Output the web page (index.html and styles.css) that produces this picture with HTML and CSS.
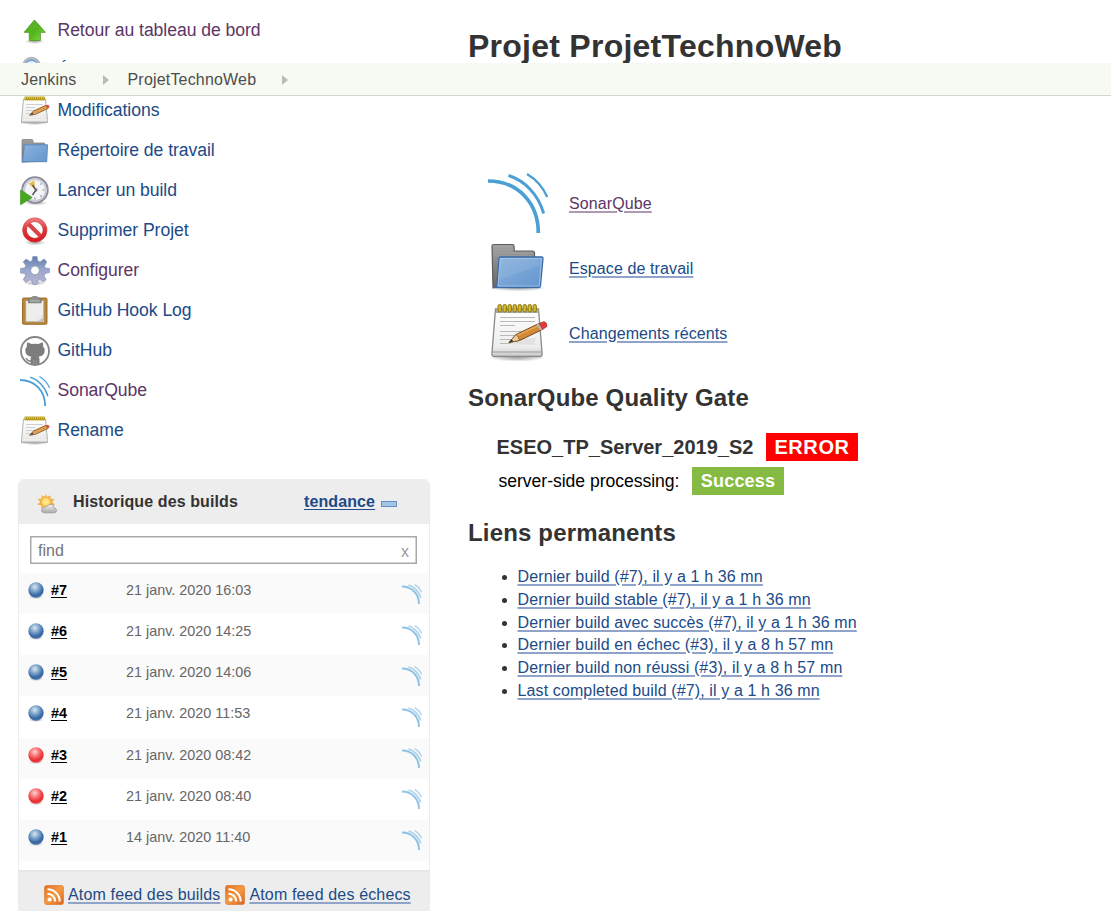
FILE: index.html
```html
<!DOCTYPE html>
<html lang="fr">
<head>
<meta charset="utf-8">
<title>ProjetTechnoWeb [Jenkins]</title>
<link rel="stylesheet" href="styles.css">
</head>
<body>
<svg class="defs" width="0" height="0" aria-hidden="true">
  <defs>
    <linearGradient id="gGreen" x1="0" y1="0" x2="1" y2="1"><stop offset="0" stop-color="#5fae2c"/><stop offset=".55" stop-color="#54b51c"/><stop offset="1" stop-color="#8be04a"/></linearGradient>
    <linearGradient id="gPaper" x1="0" y1="0" x2="0" y2="1"><stop offset="0" stop-color="#ffffff"/><stop offset=".8" stop-color="#ececec"/><stop offset="1" stop-color="#c8c8c8"/></linearGradient>
    <linearGradient id="gBlueF" x1="0" y1="0" x2="1" y2="1"><stop offset="0" stop-color="#8bb2dc"/><stop offset="1" stop-color="#6496cf"/></linearGradient>
    <linearGradient id="gGrayF" x1="0" y1="0" x2="0" y2="1"><stop offset="0" stop-color="#a0a0a0"/><stop offset="1" stop-color="#686868"/></linearGradient>
    <linearGradient id="gGear" x1="0" y1="0" x2="0" y2="1"><stop offset="0" stop-color="#5f7bab"/><stop offset=".45" stop-color="#98a6cb"/><stop offset="1" stop-color="#bab5d0"/></linearGradient>
    <linearGradient id="gRed" x1="0" y1="0" x2="0" y2="1"><stop offset="0" stop-color="#ef7475"/><stop offset=".5" stop-color="#dd3338"/><stop offset="1" stop-color="#d51f26"/></linearGradient>
    <linearGradient id="gRss" x1="0" y1="0" x2="1" y2="1"><stop offset="0" stop-color="#e06f23"/><stop offset=".5" stop-color="#f59a42"/><stop offset="1" stop-color="#d9601e"/></linearGradient>
    <radialGradient id="gBallB" cx=".42" cy=".3" r=".7"><stop offset="0" stop-color="#dbe8ec"/><stop offset=".4" stop-color="#7fa6cd"/><stop offset=".8" stop-color="#3564a3"/><stop offset="1" stop-color="#4a78b3"/></radialGradient>
    <radialGradient id="gBallR" cx=".42" cy=".3" r=".7"><stop offset="0" stop-color="#ffd6d6"/><stop offset=".4" stop-color="#f87676"/><stop offset=".8" stop-color="#e92a2f"/><stop offset="1" stop-color="#f04d4f"/></radialGradient>
    <radialGradient id="gShadow"><stop offset="0" stop-color="#000" stop-opacity=".35"/><stop offset="1" stop-color="#000" stop-opacity="0"/></radialGradient>
    <radialGradient id="gSun"><stop offset="0" stop-color="#fff3a0"/><stop offset="1" stop-color="#f9cc55"/></radialGradient>
    <linearGradient id="gCloud" x1="0" y1="0" x2="0" y2="1"><stop offset="0" stop-color="#f4f4f4"/><stop offset="1" stop-color="#a9a9a9"/></linearGradient>
  </defs>
  <symbol id="up" viewBox="0 0 30 30">
    <ellipse cx="14.500" cy="25.500" rx="10" ry="2.400" fill="url(#gShadow)"/>
    <path d="M14.500 4L25.300 16.300H20.300V24.500H9.300V16.300H4.200Z" fill="url(#gGreen)" stroke="#55a12b" stroke-width="1" stroke-linejoin="round"/>
  </symbol>
  <symbol id="search" viewBox="0 0 30 30">
    <circle cx="11.500" cy="10.500" r="8.500" fill="#d3e2f3" stroke="#b3b7bd" stroke-width="2.400"/>
    <circle cx="11.500" cy="10.500" r="6.500" fill="#dfeaf7" stroke="#6d97c9" stroke-width="1.300"/>
    <path d="M18 17l8 8" stroke="#888" stroke-width="4" stroke-linecap="round"/>
  </symbol>
  <symbol id="notepad" viewBox="0 0 60 60">
    <ellipse cx="29" cy="55" rx="28" ry="3.500" fill="url(#gShadow)"/>
    <path d="M7.500 6H50.500L54 49.500Q54.500 53.500 52.500 53.500H6Q3.600 53.500 4 49.500Z" fill="url(#gPaper)" stroke="#888a85" stroke-width="1.300"/>
    <path d="M4 49H54" stroke="#9b9d99" stroke-width="1.200"/>
    <path d="M8 6H50.500L51 10H8Z" fill="#aaa9a2"/>
    <g fill="#d2b82c" stroke="#8d770e" stroke-width="1"><rect x="10" y="1.500" width="3.400" height="7.500" rx="1.600"/><rect x="15" y="1.500" width="3.400" height="7.500" rx="1.600"/><rect x="20" y="1.500" width="3.400" height="7.500" rx="1.600"/><rect x="25" y="1.500" width="3.400" height="7.500" rx="1.600"/><rect x="30" y="1.500" width="3.400" height="7.500" rx="1.600"/><rect x="35" y="1.500" width="3.400" height="7.500" rx="1.600"/><rect x="40" y="1.500" width="3.400" height="7.500" rx="1.600"/><rect x="45" y="1.500" width="3.400" height="7.500" rx="1.600"/></g>
    <path d="M12 14.500H47M12 18.500H47M12 22.500H27M12 28.500H42M12 32.500H38M12 36.500H24M12 40.500H23" stroke="#b9bab8" stroke-width="1.200"/>
    <path d="M24 41L46 42L48 35L34 35Z" fill="#999" opacity=".15"/>
    <path d="M21 39.500L28 31.500L51 20.500L54.500 26.500L31.500 37.500Z" fill="#d38a35" stroke="#70481b" stroke-width="1"/>
    <path d="M28.500 32.700L51.500 22" stroke="#e3a654" stroke-width="1.600"/>
    <path d="M21 39.500L28 31.500Q31 33.500 31.500 37.500Z" fill="#edcd9c" stroke="#70481b" stroke-width=".7"/>
    <path d="M21 39.500L23.500 36.300L25.500 38.600Z" fill="#333"/>
    <path d="M48.500 21.500L51 20.500L54.800 26.300L52.500 27.500Z" fill="#b7b7b7"/>
    <path d="M51 20.500L56 18.500Q59.500 19.500 59 23.500L54.700 26.500Z" fill="#e23b3b" stroke="#a83434" stroke-width=".6"/>
  </symbol>
  <symbol id="notepadSmall" viewBox="0 0 30 30">
    <ellipse cx="14.500" cy="27" rx="14" ry="2" fill="url(#gShadow)"/>
    <path d="M3.500 3H25.500L27.500 24.500V26.500H1.500V24.500Z" fill="url(#gPaper)" stroke="#aaaba8" stroke-width=".9"/>
    <path d="M2 24H27.300" stroke="#fff" stroke-width="1"/>
    <path d="M4.500 2.500H25" stroke="#b99c1d" stroke-width="3.800"/>
    <path d="M5 1.500H25" stroke="#e0ca55" stroke-width="2" stroke-dasharray="1 1"/>
    <path d="M6 8.500H23M6 11.500H15M6 14.500H21M6 17.500H14" stroke="#cfd0ce" stroke-width="1"/>
    <path d="M9.500 19.300L13.500 15L26 9.300L28.300 12.300L15.500 18.300Z" fill="#dda052" stroke="#8e5d28" stroke-width=".9"/>
    <path d="M9.500 19.300L12.300 16.300L13.700 18.600Z" fill="#5d5144"/>
    <path d="M25.300 9.600L28 8.700L29.700 10.600L27.800 12.600Z" fill="#de4a45"/>
  </symbol>
  <symbol id="folder" viewBox="0 0 60 60">
    <ellipse cx="30" cy="50" rx="29" ry="3.500" fill="url(#gShadow)"/>
    <path d="M5 49.500L4 8Q4 6.500 5.500 6.500H24.500Q26 6.500 26 8L26.300 13H44.500Q46.500 13 46.500 15V47Z" fill="url(#gGrayF)" stroke="#5e5e5e" stroke-width="1.200"/>
    <path d="M5.500 9H24M5.500 12H24M5.500 15H44M5.500 18H44" stroke="#b4b4b4" stroke-width=".7" opacity=".6"/>
    <path d="M11 20Q11 19 12.500 19H53.500Q55 19 55 20.500L52.500 47.500Q52.300 49.500 51 49.500H7Q8.800 48.500 9 47Z" fill="url(#gBlueF)" stroke="#3a6ba8" stroke-width="1.300"/>
    <path d="M12.300 20.500H53.500L51.300 48H10Z" fill="none" stroke="#a9c5e6" stroke-width=".8"/>
    <path d="M11 42Q24 37 53 27L53.500 20H12Z" fill="#fff" opacity=".08"/>
  </symbol>
  <symbol id="folderSmall" viewBox="0 0 30 30">
    <path d="M2 26.300V4.500Q2 3.500 3 3.500H12Q13 3.500 13 5L13.200 7H24.500V25Z" fill="url(#gGrayF)" stroke="#858585" stroke-width=".8"/>
    <path d="M4.500 8.800H27.500L26.700 25.700H2.500Z" fill="url(#gBlueF)" stroke="#5f8abd" stroke-width="1"/>
  </symbol>
  <symbol id="clock" viewBox="0 0 30 30">
    <ellipse cx="16" cy="27" rx="12" ry="2.500" fill="url(#gShadow)"/>
    <circle cx="15" cy="14" r="12.700" fill="#f3f4f7" stroke="#8b8c9a" stroke-width="2"/>
    <circle cx="15" cy="14" r="10.800" fill="none" stroke="#c9cad5" stroke-width="1.600"/>
    <path d="M14.800 13.500L8.500 7.500L14.500 4.500Z" fill="#e2bf4d"/>
    <path d="M24.500 14h-2M15 23.500v-2M21.500 7.500l-1 1M21.500 20.500l-1-1" stroke="#8a8a8a" stroke-width="1.200"/>
    <path d="M12.500 9l3.500 5-3.500 5" fill="none" stroke="#55524c" stroke-width="1.400"/>
    <circle cx="16" cy="14" r="1.400" fill="#666"/>
    <path d="M.6 14L12.200 21.500L.6 28.800Z" fill="#45a91b" stroke="#47952a" stroke-width=".8"/>
  </symbol>
  <symbol id="deny" viewBox="0 0 30 30">
    <ellipse cx="15" cy="26.500" rx="11" ry="3" fill="url(#gShadow)"/>
    <circle cx="14.800" cy="14" r="10.200" fill="#fff" stroke="#c95c5f" stroke-width="4.600"/>
    <path d="M7.500 7l14.500 14.500" stroke="#dc4146" stroke-width="4"/>
    <circle cx="14.800" cy="14" r="10.200" fill="none" stroke="url(#gRed)" stroke-width="3.600"/>
  </symbol>
  <symbol id="gear" viewBox="0 0 30 30">
    <ellipse cx="15" cy="27" rx="11" ry="2.600" fill="url(#gShadow)"/>
    <path fill-rule="evenodd" d="M12.800 .6H17L17.800 5L20 5.900L24.200 3L26.800 6L24.400 10L25.300 12L29.400 12.500V16.500L25.200 17.500L24 20L26.200 23.600L23.500 26L20 23.600L17.500 24.700L16.800 28.600H13L12 24.700L10 23.800L5.800 26.500L3.300 23.600L5.600 19.500L4.800 17.500L.6 17V12.500L4.900 11.800L5.800 9.500L3.200 6L6 3.100L10 5.600L12 4.900ZM15 10.100A4.300 4.300 0 1 0 15 18.700A4.300 4.300 0 1 0 15 10.100Z" fill="url(#gGear)" stroke="#8c9abb" stroke-width=".8" stroke-linejoin="round"/>
  </symbol>
  <symbol id="clipboard" viewBox="0 0 30 30">
    <rect x="2.500" y="2" width="24.500" height="26.300" rx="1.200" fill="#bd8637" stroke="#926523" stroke-width=".9"/>
    <path d="M5.700 4.500H23.800V25.800H5.700Z" fill="#eeefed" stroke="#a1a19b" stroke-width=".8"/>
    <path d="M24 20.500L17.500 26H24Z" fill="#c2c2be"/><path d="M19 21l4.500-1-6 6z" fill="#fafafa" stroke="#bbb" stroke-width=".4"/>
    <path d="M8.500 6.800Q7.500 3.500 9.500 2.500L11 2Q12 .4 14.800 .4T18.500 2L20 2.500Q22 3.500 21 6.800Z" fill="#90928f" stroke="#6d6f6c" stroke-width=".8"/>
    <path d="M10 5H19.500" stroke="#b0b2af" stroke-width="1.300"/>
  </symbol>
  <symbol id="github" viewBox="0 0 30 30">
    <circle cx="15" cy="15" r="14" fill="#fff" stroke="#858585" stroke-width="1.800"/>
    <path d="M7.200 6.600Q9.500 6.600 11.500 8.100Q15 7.300 18.500 8.100Q20.500 6.600 22.800 6.600Q23.500 8.500 23 10.300Q25 12.300 24.600 15.600Q24.200 20 18.600 20.700Q19.500 21.800 19.500 23.200V28.300H10.600V25.800Q7.700 26.200 6.500 23.800Q5.900 22.600 5 22.100Q6.700 21.500 7.900 23.300Q9 24.700 10.600 24V23.200Q10.600 21.600 11.400 20.700Q5.800 20 5.400 15.600Q5 12.300 7 10.300Q6.500 8.500 7.200 6.600Z" fill="#7d7d7d"/>
    <path d="M13.800 24v4.500M16.300 24v4.500" stroke="#a5a5a5" stroke-width=".6"/>
  </symbol>
  <symbol id="sonar" viewBox="0 0 60 60">
    <path d="M0 8C30 8 50.300 30 50.300 60" fill="none" stroke="#4b9fd5" stroke-width="3.700"/>
    <path d="M20.500 2.500C37 7.500 50.500 22 55.700 40.500" fill="none" stroke="#4b9fd5" stroke-width="2.900"/>
    <path d="M39 1C48.500 6.800 55 14 59.200 24" fill="none" stroke="#4b9fd5" stroke-width="2.300"/>
  </symbol>
  <symbol id="wave" viewBox="0 0 20 20">
    <path d="M0 2.600C10 2.600 17 10 17 20" fill="none" stroke="#4b9fd5" stroke-width="2"/>
    <path d="M6.500 1C12 2.500 17 7.500 18.700 13.500" fill="none" stroke="#4b9fd5" stroke-width="1.700" opacity=".75"/>
    <path d="M12.700 .5C16 2.300 18.300 5 19.700 8.300" fill="none" stroke="#4b9fd5" stroke-width="1.500" opacity=".65"/>
  </symbol>
  <symbol id="ballBlue" viewBox="0 0 18 18"><ellipse cx="9" cy="16" rx="7.500" ry="2" fill="url(#gShadow)"/><circle cx="9" cy="9" r="7.700" fill="url(#gBallB)"/></symbol>
  <symbol id="ballRed" viewBox="0 0 18 18"><ellipse cx="9" cy="16" rx="7.500" ry="2" fill="url(#gShadow)"/><circle cx="9" cy="9" r="7.700" fill="url(#gBallR)"/></symbol>
  <symbol id="rss" viewBox="0 0 20 20">
    <rect x=".3" y=".3" width="19.400" height="19.400" rx="3" fill="url(#gRss)" stroke="#dc7a38" stroke-width=".6"/>
    <circle cx="5.600" cy="14.600" r="2" fill="#fff"/>
    <path d="M3.500 8.800A7.700 7.700 0 0 1 11.200 16.500M3.500 4.300A12.200 12.200 0 0 1 15.700 16.500" fill="none" stroke="#fff" stroke-width="2.100"/>
  </symbol>
  <symbol id="weather" viewBox="0 0 20 20">
    <path d="M9 0L10.200 3L13.600 1.200L13.500 4.800L17.800 5L15 8L18 10.500L13 12L4 14L4.500 11.500L.3 10.500L3.200 8L.8 4.800L4.600 4.500L4.800 1.300L7.700 3Z" fill="#f5b04a"/>
    <circle cx="9" cy="8" r="5" fill="url(#gSun)" stroke="#eda43b" stroke-width=".7"/>
    <path d="M7.500 18.800Q4.300 18.600 4.500 15.700Q4.900 13.500 7.500 13.600Q8.500 11.600 10.500 12Q12 9.700 14.800 10.500Q17.500 11.600 17.100 14Q19.700 14.500 19.600 16.500Q19.400 18.800 17 18.800Z" fill="url(#gCloud)" stroke="#989898" stroke-width=".8"/>
  </symbol>
</svg>

<div class="breadcrumbs">
  <span>Jenkins</span><i class="chevron"></i><span>ProjetTechnoWeb</span><i class="chevron"></i>
</div>

<div class="page">
  <aside class="side">
    <nav class="tasks">
      <a class="task visited"><svg><use href="#up"/></svg><span>Retour au tableau de bord</span></a>
      <a class="task"><svg><use href="#search"/></svg><span>État</span></a>
      <a class="task"><svg><use href="#notepadSmall"/></svg><span>Modifications</span></a>
      <a class="task"><svg><use href="#folderSmall"/></svg><span>Répertoire de travail</span></a>
      <a class="task"><svg><use href="#clock"/></svg><span>Lancer un build</span></a>
      <a class="task"><svg><use href="#deny"/></svg><span>Supprimer Projet</span></a>
      <a class="task visited"><svg><use href="#gear"/></svg><span>Configurer</span></a>
      <a class="task"><svg><use href="#clipboard"/></svg><span>GitHub Hook Log</span></a>
      <a class="task"><svg><use href="#github"/></svg><span>GitHub</span></a>
      <a class="task visited"><svg><use href="#sonar"/></svg><span>SonarQube</span></a>
      <a class="task"><svg><use href="#notepadSmall"/></svg><span>Rename</span></a>
    </nav>
    <section class="history">
      <header class="history-head">
        <svg class="weather"><use href="#weather"/></svg>
        <span class="history-title">Historique des builds</span>
        <a class="trend">tendance</a><i class="collapse"></i>
      </header>
      <div class="find"><span>find</span><span class="clear">x</span></div>
      <div class="builds">
        <div class="build"><svg class="ball"><use href="#ballBlue"/></svg><a>#7</a><time>21 janv. 2020 16:03</time><svg class="wave"><use href="#wave"/></svg></div>
        <div class="build"><svg class="ball"><use href="#ballBlue"/></svg><a>#6</a><time>21 janv. 2020 14:25</time><svg class="wave"><use href="#wave"/></svg></div>
        <div class="build"><svg class="ball"><use href="#ballBlue"/></svg><a>#5</a><time>21 janv. 2020 14:06</time><svg class="wave"><use href="#wave"/></svg></div>
        <div class="build"><svg class="ball"><use href="#ballBlue"/></svg><a>#4</a><time>21 janv. 2020 11:53</time><svg class="wave"><use href="#wave"/></svg></div>
        <div class="build"><svg class="ball"><use href="#ballRed"/></svg><a>#3</a><time>21 janv. 2020 08:42</time><svg class="wave"><use href="#wave"/></svg></div>
        <div class="build"><svg class="ball"><use href="#ballRed"/></svg><a>#2</a><time>21 janv. 2020 08:40</time><svg class="wave"><use href="#wave"/></svg></div>
        <div class="build"><svg class="ball"><use href="#ballBlue"/></svg><a>#1</a><time>14 janv. 2020 11:40</time><svg class="wave"><use href="#wave"/></svg></div>
      </div>
      <footer class="feeds">
        <svg><use href="#rss"/></svg><a class="link">Atom feed des builds</a>
        <svg><use href="#rss"/></svg><a class="link">Atom feed des échecs</a>
      </footer>
    </section>
  </aside>

  <main class="main">
    <h1>Projet ProjetTechnoWeb</h1>
    <div class="shortcuts">
      <div class="shortcut"><svg><use href="#sonar"/></svg><a class="link visited">SonarQube</a></div>
      <div class="shortcut"><svg><use href="#folder"/></svg><a class="link">Espace de travail</a></div>
      <div class="shortcut"><svg><use href="#notepad"/></svg><a class="link">Changements récents</a></div>
    </div>
    <h2>SonarQube Quality Gate</h2>
    <div class="gate">
      <div class="gate-row"><b class="gate-name">ESEO_TP_Server_2019_S2</b><b class="badge error">ERROR</b></div>
      <div class="gate-row"><span class="gate-note">server-side processing:</span><b class="badge success">Success</b></div>
    </div>
    <h2>Liens permanents</h2>
    <ul class="permalinks">
      <li><a class="link">Dernier build (#7), il y a 1 h 36 mn</a></li>
      <li><a class="link">Dernier build stable (#7), il y a 1 h 36 mn</a></li>
      <li><a class="link">Dernier build avec succès (#7), il y a 1 h 36 mn</a></li>
      <li><a class="link">Dernier build en échec (#3), il y a 8 h 57 mn</a></li>
      <li><a class="link">Dernier build non réussi (#3), il y a 8 h 57 mn</a></li>
      <li><a class="link">Last completed build (#7), il y a 1 h 36 mn</a></li>
    </ul>
  </main>
</div>
</body>
</html>
```

FILE: styles.css
```css
* { box-sizing: border-box; }
body {
  margin: 0;
  height: 911px;
  overflow: hidden;
  background: #fff;
  color: #333;
  font: 16px/20px "Liberation Sans", Arial, sans-serif;
  white-space: nowrap;
}
svg { display: block; flex: none; }
.defs { position: absolute; }
h1, h2, ul { margin: 0; padding: 0; }

.breadcrumbs {
  position: absolute;
  top: 63px;
  left: 0;
  width: 100%;
  height: 33px;
  padding: 1px 0 0 21px;
  display: flex;
  align-items: center;
  background: #f6faf2;
  border-bottom: 1px solid #d3d7cf;
  color: #4d4d4d;
  letter-spacing: .18px;
}
.chevron {
  margin: 0 19px 0 26px;
  border: solid transparent;
  border-width: 5px 0 5px 6px;
  border-left-color: #bababa;
}

.page { display: flex; height: 911px; overflow: hidden; }
.side { width: 412px; margin: 10px 38px 0 18px; flex: none; }
.tasks { height: 469px; }
.task {
  display: flex;
  align-items: center;
  height: 40px;
  padding-left: 2px;
  gap: 7.5px;
  color: #204a87;
  font-size: 17.6px;
  letter-spacing: -.06px;
}
.task svg { width: 30px; height: 30px; margin-top: 2px; }
.task.visited, .link.visited { color: #5c3566; }

.history {
  height: 440px;
  border: 1px solid #ececec;
  border-radius: 6px 6px 0 0;
  overflow: hidden;
}
.history-head {
  display: flex;
  align-items: center;
  height: 44px;
  padding-left: 18px;
  background: #ededed;
  font-weight: bold;
  letter-spacing: .11px;
}
.weather { width: 20px; height: 20px; margin: 4px 16px 0 0; }
.history-title { width: 231px; }
.trend { color: #204a87; text-decoration: underline; text-underline-offset: 2px; }
.collapse {
  width: 16px;
  height: 6px;
  margin: 3px 0 0 6px;
  border: 1px solid #6690c4;
  background: #a5c3e3;
}
.find {
  display: flex;
  justify-content: space-between;
  height: 28px;
  margin: 12px 12px 9px 11px;
  padding: 4px 7px 0;
  border: 1px solid #a9a9a9;
  box-shadow: inset 0 0 0 .5px #a9a9a9;
  color: #757575;
}
.clear { padding-top: 1px; color: #999; }
.build {
  display: flex;
  align-items: center;
  height: 41.15px;
  padding: 0 7px 7px 8px;
  font-size: 14.4px;
}
.build:nth-child(odd) { background: #fafafa; }
.ball { width: 18px; height: 18px; }
.build a { width: 75px; margin-left: 6px; color: #000; font-weight: bold; text-decoration: underline; text-underline-offset: 2px; }
.build time { color: #666; }
.wave { width: 20px; height: 20px; margin: 7px 0 0 auto; opacity: .6; }
.feeds {
  display: flex;
  align-items: center;
  height: 50px;
  margin-top: 9px;
  padding: 0 0 1px 25px;
  border-top: 2px solid #e7e7e7;
  background: #ededed;
  letter-spacing: .15px;
}
.feeds svg { width: 20px; height: 20px; margin-right: 4px; }
.feeds .link { margin-right: 5px; }

.link {
  color: #204a87;
  text-decoration: underline;
  text-decoration-color: #8fa4c8;
  text-decoration-thickness: 2px;
  text-underline-offset: 2px;
}
.link.visited { text-decoration-color: #ad9ab2; }

.main { flex: 1; padding-top: 26px; }
h1 { font-size: 32px; line-height: 40px; height: 145px; letter-spacing: .25px; }
.shortcuts { padding-left: 20px; letter-spacing: .1px; }
.shortcut { display: flex; align-items: center; height: 65px; gap: 21px; }
.shortcut svg { width: 60px; height: 60px; margin-bottom: 2px; }
h2 { height: 30px; margin-top: 17px; font-size: 24px; line-height: 30px; letter-spacing: .16px; }
.gate { display: grid; gap: 6px; padding: 20px 0 0 28.5px; }
.gate-row { display: flex; height: 28px; line-height: 28px; }
.gate-name { width: 269.5px; font-size: 20px; }
.gate-note { width: 193.5px; padding-left: 2px; color: #000; font-size: 17.6px; letter-spacing: -.04px; }
.gate-note + .badge { margin-left: 2px; font-size: 18px; letter-spacing: .2px; }
.badge { width: 92px; text-align: center; color: #fff; font-size: 20px; letter-spacing: .6px; }
.error { background: #f00; }
.success { background: #85bb43; }
.gate + h2 { margin-top: 23px; }
.permalinks { margin-top: 18px; padding-left: 49.5px; line-height: 22.8px; letter-spacing: .12px; }
```
